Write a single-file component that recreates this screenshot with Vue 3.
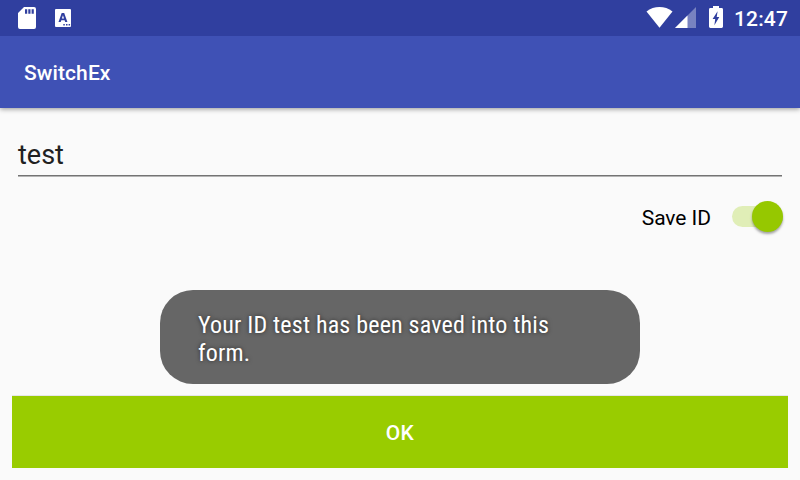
<script setup>
import { ref } from 'vue'

const userId = ref('test')
const saveId = ref(true)
const toastLines = ref(['Your ID test has been saved into this', 'form.'])
</script>

<template>
  <div class="screen">
    <header class="status">
      <svg class="status-icons" width="80" height="36" viewBox="0 0 80 36">
        <path fill="#fff" fill-rule="evenodd" d="M24 7h10a2 2 0 0 1 2 2v18a2 2 0 0 1-2 2H20a2 2 0 0 1-2-2V13zM25 9.200v4.600h2.200V9.200zM28.300 9.200v4.600h2.200V9.200zM31.600 9.200v4.600h2.200V9.200z" />
        <path fill="#fff" fill-rule="evenodd" d="M56 9h14a1 1 0 0 1 1 1v16a1 1 0 0 1-1 1H56a1 1 0 0 1-1-1V10a1 1 0 0 1 1-1zM61.700 13L58.500 22h2.200l.6-1.800h3.300l.6 1.800h2.200L64.200 13zM62.950 15.300l1.100 3.300h-2.200zM63.300 24v1.500h1.500V24zM66 24v1.500h1.500V24zM68.600 24v1.500h1.500V24z" />
      </svg>
      <div class="status-right">
        <svg width="80" height="36" viewBox="0 0 80 36">
          <path fill="#fff" d="M6.500 11.400C14 5.600 25 5.600 32.500 11.400L19.500 27.800z" />
          <path fill="#fff" fill-opacity=".35" d="M56 7v21H35z" />
          <path fill="#fff" d="M47.500 15.500V28H35z" />
          <path fill="#fff" fill-rule="evenodd" d="M73 6h6v2h2.600a1.400 1.400 0 0 1 1.400 1.400v17.200a1.400 1.400 0 0 1-1.400 1.400H70.400a1.400 1.400 0 0 1-1.400-1.400V9.400A1.400 1.400 0 0 1 70.400 8H73zM77.600 11.200L72.600 19h2.600l-.8 6.200 4.900-8.200h-2.600z" />
        </svg>
        <span class="clock">12:47</span>
      </div>
    </header>
    <div class="appbar">SwitchEx</div>
    <main class="content">
      <div class="field">{{ userId }}</div>
      <div class="switch-row">
        <span class="switch-label">Save ID</span>
        <div class="switch" :class="{ on: saveId }"><i class="thumb"></i></div>
      </div>
      <div class="button">OK</div>
    </main>
    <div class="toast">
      <span v-for="line in toastLines" :key="line" class="toast-line">{{ line }}</span>
    </div>
  </div>
</template>

<style>
body { margin: 0; overflow: hidden; }
</style>

<style scoped>
.screen {
  position: relative;
  width: 800px;
  height: 480px;
  display: flex;
  flex-direction: column;
  background: #fafafa;
  font-family: Roboto, sans-serif;
  overflow: hidden;
}
.status {
  position: relative;
  z-index: 1;
  height: 36px;
  display: flex;
  justify-content: space-between;
  background: #303f9f;
}
.status-right {
  display: flex;
  padding-right: 12px;
}
.status svg { display: block; overflow: visible; }
.clock {
  width: 54px;
  margin-left: 14px;
  color: #fff;
  font-size: 21px;
  font-weight: 500;
  line-height: 38px;
  letter-spacing: .15px;
  white-space: nowrap;
}
.appbar {
  height: 72px;
  box-sizing: border-box;
  padding-left: 24px;
  background: #3f51b5;
  color: #fff;
  font-size: 21px;
  font-weight: 500;
  line-height: 74px;
  letter-spacing: .1px;
  box-shadow: 0 1px 5px rgba(0, 0, 0, .42);
}
.content {
  flex: 1;
  display: flex;
  flex-direction: column;
  padding: 24px 12px 12px;
}
.field {
  margin: 0 6px;
  height: 43px;
  border-bottom: 1px solid #737373;
  box-shadow: 0 1px 0 #b4b4b4;
  color: #212121;
  font-size: 27px;
  line-height: 47px;
}
.switch-row {
  display: flex;
  justify-content: flex-end;
  align-items: center;
  height: 36px;
  margin-top: 22px;
  padding-right: 5px;
}
.switch-label {
  font-size: 21px;
  color: #000;
  padding-top: 3px;
  margin-right: 21px;
  letter-spacing: -.05px;
}
.switch {
  width: 51px;
  height: 21px;
  display: flex;
  align-items: center;
  border-radius: 11px;
  background: #d0d0d0;
}
.switch.on {
  justify-content: flex-end;
  background: #e0eeb7;
}
.thumb {
  width: 31px;
  height: 31px;
  flex: none;
  border-radius: 50%;
  background: #96c800;
  box-shadow: 0 2px 2.500px rgba(0, 0, 0, .35);
}
.button {
  height: 72px;
  margin-top: auto;
  background: #99cc00;
  box-shadow: 0 -1px 0 #e6e6e8;
  color: #fff;
  font-size: 21px;
  font-weight: 500;
  line-height: 74px;
  letter-spacing: .3px;
  text-align: center;
}
.toast {
  position: absolute;
  left: 160px;
  top: 290px;
  width: 480px;
  height: 94px;
  box-sizing: border-box;
  padding: 21px 38px;
  border-radius: 33px;
  background: #666;
  color: #fff;
  font-family: "Roboto Condensed", Roboto, sans-serif;
  font-stretch: 75%;
  font-size: 24px;
  line-height: 28px;
  letter-spacing: .19px;
  text-shadow: 0 0 4px rgba(0, 0, 0, .6);
  white-space: nowrap;
}
.toast-line { display: block; }
</style>
